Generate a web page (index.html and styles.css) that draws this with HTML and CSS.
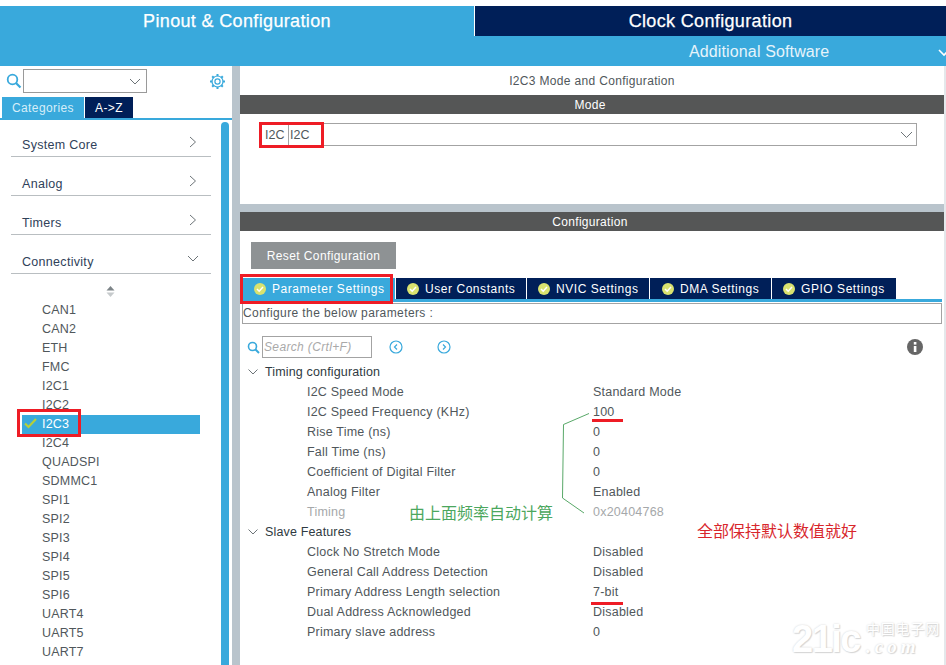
FILE: index.html
```html
<!DOCTYPE html>
<html lang="en">
<head>
<meta charset="utf-8">
<title>I2C3 Mode and Configuration</title>
<link rel="stylesheet" href="styles.css">
</head>
<body>
<div class="page">
  <header class="header">
    <div class="top-tabs">
      <div class="top-tab top-active">Pinout &amp; Configuration</div>
      <div class="top-tab top-dark">Clock Configuration</div>
    </div>
    <div class="sub-tab">
      <span class="sub-label">Additional Software</span>
      <svg class="sub-chev" width="10" height="8" viewBox="0 0 10 8"><path d="M1 1l5 5 5-5" fill="none" stroke="#fff" stroke-width="1.6"/></svg>
    </div>
  </header>
  <div class="main">
    <aside class="sidebar">
      <div class="search-row">
        <svg class="icon-search" width="16" height="16" viewBox="0 0 16 16"><circle cx="6.5" cy="6.5" r="4.8" fill="none" stroke="#39a9dc" stroke-width="1.8"/><path d="M10 10l4.5 4.5" stroke="#39a9dc" stroke-width="2.2"/></svg>
        <div class="combo">
          <svg width="12" height="7" viewBox="0 0 12 7"><path d="M1 1l5 5 5-5" fill="none" stroke="#6d7478" stroke-width="1"/></svg>
        </div>
        <svg class="icon-gear" width="17" height="17" viewBox="0 0 17 17"><circle cx="8.5" cy="8.5" r="2.6" fill="none" stroke="#39a9dc" stroke-width="1.2"/><circle cx="8.5" cy="8.5" r="5.5" fill="none" stroke="#39a9dc" stroke-width="1.2"/><path d="M8.5 1v2.2M8.5 13.8V16M1 8.5h2.2M13.8 8.5H16M3.2 3.2l1.5 1.5M12.3 12.3l1.5 1.5M13.8 3.2l-1.5 1.5M4.7 12.3l-1.5 1.5" stroke="#39a9dc" stroke-width="2"/></svg>
      </div>
      <div class="side-tabs">
        <div class="side-tab side-active">Categories</div>
        <div class="side-tab side-dark">A-&gt;Z</div>
      </div>
      <div class="side-body">
        <div class="side-content">
          <div class="cat"><span>System Core</span><svg width="8" height="12" viewBox="0 0 8 12"><path d="M1 1l5.500 5-5.500 5" fill="none" stroke="#6d7478"/></svg></div>
          <div class="cat"><span>Analog</span><svg width="8" height="12" viewBox="0 0 8 12"><path d="M1 1l5.500 5-5.500 5" fill="none" stroke="#6d7478"/></svg></div>
          <div class="cat"><span>Timers</span><svg width="8" height="12" viewBox="0 0 8 12"><path d="M1 1l5.500 5-5.500 5" fill="none" stroke="#6d7478"/></svg></div>
          <div class="cat"><span>Connectivity</span><svg class="cat-open" width="12" height="8" viewBox="0 0 12 8"><path d="M1 1l5 5 5-5" fill="none" stroke="#6d7478"/></svg></div>
          <div class="sorter">
            <svg width="9" height="11" viewBox="0 0 9 11"><path d="M4.500 0l4 4.500H.5z" fill="#7d8488"/><path d="M4.500 11l-4-4.500h8z" fill="#c6cacc"/></svg>
          </div>
          <ul class="ip-list">
            <li>CAN1</li><li>CAN2</li><li>ETH</li><li>FMC</li><li>I2C1</li><li>I2C2</li>
            <li class="ip-selected"><svg class="ip-check" width="13" height="11" viewBox="0 0 13 11"><path d="M1 5.500l3.500 3.500 7.500-8" fill="none" stroke="#b5cf3a" stroke-width="2.200"/></svg>I2C3</li>
            <li>I2C4</li><li>QUADSPI</li><li>SDMMC1</li><li>SPI1</li><li>SPI2</li><li>SPI3</li><li>SPI4</li><li>SPI5</li><li>SPI6</li><li>UART4</li><li>UART5</li><li>UART7</li>
          </ul>
        </div>
        <div class="scrollbar"></div>
      </div>
    </aside>
    <main class="content">
      <section class="mode-panel">
        <div class="panel-title">I2C3 Mode and Configuration</div>
        <div class="bar">Mode</div>
        <div class="mode-select">
          <span class="chip">I2C</span><span class="chip-value">I2C</span>
          <svg width="13" height="8" viewBox="0 0 13 8"><path d="M1 1l5.500 5.500L12 1" fill="none" stroke="#6d7478"/></svg>
        </div>
      </section>
      <section class="config-panel">
        <div class="bar">Configuration</div>
        <button class="reset" type="button">Reset Configuration</button>
        <div class="tabs">
          <div class="tab tab-active"><svg class="tick" width="12" height="12" viewBox="0 0 12 12"><circle cx="6" cy="6" r="6" fill="#d9e26f"/><path d="M3 6l2.200 2.200L9 4" fill="none" stroke="#fff" stroke-width="1.500"/></svg>Parameter Settings</div>
          <div class="tab tab-user"><svg class="tick" width="12" height="12" viewBox="0 0 12 12"><circle cx="6" cy="6" r="6" fill="#d9e26f"/><path d="M3 6l2.200 2.200L9 4" fill="none" stroke="#fff" stroke-width="1.500"/></svg>User Constants</div>
          <div class="tab tab-nvic"><svg class="tick" width="12" height="12" viewBox="0 0 12 12"><circle cx="6" cy="6" r="6" fill="#d9e26f"/><path d="M3 6l2.200 2.200L9 4" fill="none" stroke="#fff" stroke-width="1.500"/></svg>NVIC Settings</div>
          <div class="tab tab-dma"><svg class="tick" width="12" height="12" viewBox="0 0 12 12"><circle cx="6" cy="6" r="6" fill="#d9e26f"/><path d="M3 6l2.200 2.200L9 4" fill="none" stroke="#fff" stroke-width="1.500"/></svg>DMA Settings</div>
          <div class="tab tab-gpio"><svg class="tick" width="12" height="12" viewBox="0 0 12 12"><circle cx="6" cy="6" r="6" fill="#d9e26f"/><path d="M3 6l2.200 2.200L9 4" fill="none" stroke="#fff" stroke-width="1.500"/></svg>GPIO Settings</div>
        </div>
        <div class="hint">Configure the below parameters :</div>
        <div class="tools">
          <svg class="tool-search" width="13" height="13" viewBox="0 0 13 13"><circle cx="5.500" cy="5.500" r="4" fill="none" stroke="#39a9dc" stroke-width="1.600"/><path d="M8.500 8.500l3.500 3.500" stroke="#39a9dc" stroke-width="2"/></svg>
          <div class="search-box">Search (Crtl+F)</div>
          <svg class="nav nav-prev" width="14" height="14" viewBox="0 0 14 14"><circle cx="7" cy="7" r="6" fill="none" stroke="#39a9dc" stroke-width="1.200"/><path d="M8 4.500L5.500 7 8 9.500" fill="none" stroke="#39a9dc" stroke-width="1.200"/></svg>
          <svg class="nav nav-next" width="14" height="14" viewBox="0 0 14 14"><circle cx="7" cy="7" r="6" fill="none" stroke="#39a9dc" stroke-width="1.200"/><path d="M6 4.500L8.500 7 6 9.500" fill="none" stroke="#39a9dc" stroke-width="1.200"/></svg>
          <svg class="info" width="16" height="16" viewBox="0 0 16 16"><circle cx="8" cy="8" r="8" fill="#666"/><rect x="6.800" y="7" width="2.600" height="6" fill="#fff"/><rect x="6.800" y="3" width="2.600" height="2.600" fill="#fff"/></svg>
        </div>
        <div class="tree">
          <div class="group"><svg width="10" height="6" viewBox="0 0 10 6"><path d="M.5.500L5 5 9.500.500" fill="none" stroke="#6d7478"/></svg>Timing configuration</div>
          <div class="param"><span>I2C Speed Mode</span><span>Standard Mode</span></div>
          <div class="param"><span>I2C Speed Frequency (KHz)</span><span>100</span></div>
          <div class="param"><span>Rise Time (ns)</span><span>0</span></div>
          <div class="param"><span>Fall Time (ns)</span><span>0</span></div>
          <div class="param"><span>Coefficient of Digital Filter</span><span>0</span></div>
          <div class="param"><span>Analog Filter</span><span>Enabled</span></div>
          <div class="param param-off"><span>Timing</span><span>0x20404768</span></div>
          <div class="group"><svg width="10" height="6" viewBox="0 0 10 6"><path d="M.5.500L5 5 9.500.500" fill="none" stroke="#6d7478"/></svg>Slave Features</div>
          <div class="param"><span>Clock No Stretch Mode</span><span>Disabled</span></div>
          <div class="param"><span>General Call Address Detection</span><span>Disabled</span></div>
          <div class="param"><span>Primary Address Length selection</span><span>7-bit</span></div>
          <div class="param"><span>Dual Address Acknowledged</span><span>Disabled</span></div>
          <div class="param"><span>Primary slave address</span><span>0</span></div>
        </div>
      </section>
    </main>
    <div class="edge"></div>
  </div>

  <div class="mark mark-chip"></div>
  <div class="mark mark-i2c3"></div>
  <div class="mark mark-tab"></div>
  <div class="line line-100"></div>
  <div class="line line-7bit"></div>
  <svg class="bracket" width="30" height="102" viewBox="0 0 30 102"><path d="M28 .5L2.500 11.500 1.500 85 23 100" fill="none" stroke="#58a868"/></svg>
  <div class="note note-green">由上面频率自动计算</div>
  <div class="note note-red">全部保持默认数值就好</div>
  <div class="watermark"><span class="wm-big">21ic</span><span class="wm-side"><span class="wm-cn">中国电子网</span><span class="wm-com">.com</span></span></div>
</div>
</body>
</html>
```

FILE: styles.css
```css
* { box-sizing: border-box; }
html, body { margin: 0; padding: 0; background: #fff; }
body { font-family: "Liberation Sans", Arial, sans-serif; font-size: 12px; color: #50575b; }
.page { position: relative; width: 946px; height: 665px; overflow: hidden; background: #fff; padding-top: 6px; }

/* header */
.header { height: 60px; background: #39a9dc; color: #fff; }
.top-tabs { display: flex; height: 30px; }
.top-tab { display: flex; align-items: center; justify-content: center; padding-top: 1px; font-size: 18px; letter-spacing: .35px; -webkit-text-stroke: .25px #fff; }
.top-active { width: 474px; }
.top-dark { flex: 1; background: #001f58; border-left: 1px solid #fff; }
.sub-tab { position: relative; height: 30px; display: flex; align-items: center; padding: 1px 0 0 689px; font-size: 16px; letter-spacing: .13px; color: #e6f4fb; }
.sub-chev { position: absolute; right: -2px; top: 13px; }

/* layout */
.main { display: flex; height: 599px; background: #b9c4cc; }
.sidebar { width: 232px; background: #fff; display: flex; flex-direction: column; }
.content { width: 704px; margin-left: 8px; display: flex; flex-direction: column; gap: 8px; }
.edge { width: 2px; background: #e4e8eb; }

/* sidebar */
.search-row { display: flex; align-items: center; height: 31px; padding: 2px 0 3px 6px; }
.icon-search { margin-right: 1px; }
.combo { width: 124px; height: 24px; border: 1px solid #9a9a9a; display: flex; align-items: center; justify-content: flex-end; padding-right: 5px; }
.icon-gear { margin-left: 62px; }
.side-tabs { display: flex; height: 21px; padding-left: 2px; gap: 1px; }
.side-tab { display: flex; align-items: center; justify-content: center; color: #d6eef9; letter-spacing: .4px; }
.side-active { width: 82px; background: #39a9dc; }
.side-dark { width: 48px; background: #001f58; color: #fff; }
.side-body { flex: 1; display: flex; border-top: 2px solid #39a9dc; min-height: 0; padding: 2px 3px 0 1px; }
.side-content { width: 220px; padding-left: 10px; }
.scrollbar { width: 8px; background: #39a9dc; border-radius: 4px 4px 0 0; }
.cat { height: 39px; width: 200px; border-bottom: 1px solid #b9bec1; display: flex; align-items: flex-end; justify-content: space-between; padding: 0 14px 4px 11px; font-size: 12.500px; letter-spacing: .3px; color: #2f4159; }
.cat:first-child { height: 35px; }
.cat svg { margin-bottom: 4px; }
.cat .cat-open { margin: 0 -2px 6px 0; }
.sorter { height: 27px; display: flex; align-items: center; justify-content: center; padding: 8px 0 0 0; width: 198px; }
.ip-list { list-style: none; margin: 0; padding: 0; width: 189px; }
.ip-list li { position: relative; height: 19px; line-height: 19px; padding-left: 31px; font-size: 12.500px; letter-spacing: .2px; color: #50575b; }
.ip-list .ip-selected { background: #39a9dc; color: #fff; margin-left: 11px; padding-left: 20px; width: 178px; }
.ip-check { position: absolute; left: 2px; top: 3px; }

/* panels */
.mode-panel { height: 138px; background: #fff; }
.panel-title { height: 29px; display: flex; align-items: center; justify-content: center; letter-spacing: .33px; }
.bar { height: 19px; padding-right: 4px; background: #555656; color: #fff; display: flex; align-items: center; justify-content: center; letter-spacing: .3px; }
.mode-select { height: 23px; margin: 9px 27px 0 20px; border: 1px solid #a3a3a3; display: flex; align-items: center; padding-right: 3px; font-size: 12.500px; }
.chip { width: 28px; padding-left: 4px; height: 100%; line-height: 22px; border-right: 1px solid #a3a3a3; }
.chip-value { padding-left: 1px; flex: 1; }
.config-panel { flex: 1; background: #fff; min-height: 0; }
.reset { display: block; width: 145px; height: 27px; margin: 11px 0 9px 11px; border: 0; background: #8e9294; color: #fff; font: 12px "Liberation Sans", Arial, sans-serif; letter-spacing: .4px; padding: 0; }
.tabs { display: flex; height: 24px; padding-left: 2px; margin-right: 2px; border-bottom: 3px solid #39a9dc; }
.tab { height: 21px; display: flex; align-items: center; background: #001f58; color: #fff; letter-spacing: .55px; border-right: 1px solid #fff; }
.tab-active { width: 154px; padding-left: 12px; background: #39a9dc; }
.tab-user { width: 131px; padding-left: 11px; }
.tab-nvic { width: 123px; padding-left: 11px; }
.tab-dma { width: 122px; padding-left: 12px; }
.tab-gpio { width: 124px; padding-left: 11px; border-right: 0; }
.tick { margin-right: 6px; flex: none; }
.hint { height: 21px; margin: 1px 2px 0 2px; border: 1px solid #a3a3a3; line-height: 19px; letter-spacing: .4px; color: #50575b; }
.tools { position: relative; height: 22px; margin-top: 12px; display: flex; align-items: center; padding-left: 7px; }
.search-box { width: 110px; height: 22px; margin-left: 2px; border: 1px solid #a3a3a3; line-height: 20px; padding-left: 1px; font-style: italic; color: #a9a9a9; letter-spacing: .35px; white-space: nowrap; overflow: hidden; }
.nav-prev { margin-left: 17px; }
.nav-next { margin-left: 34px; }
.info { margin-left: 456px; }
.tree { padding-top: 4px; }
.group { height: 20px; display: flex; align-items: center; padding-left: 8px; color: #2f3a42; letter-spacing: .15px; font-size: 12.500px; }
.group svg { margin-right: 7px; }
.param { height: 20px; display: grid; grid-template-columns: 286px 1fr; align-items: center; padding-left: 67px; letter-spacing: .22px; font-size: 12.500px; }
.param-off { color: #a5a8aa; }

/* annotations */
.mark { position: absolute; border: 3px solid #ee1c25; }
.mark-chip { left: 259px; top: 122px; width: 65px; height: 26px; }
.mark-i2c3 { left: 17px; top: 409px; width: 64px; height: 28px; }
.mark-tab { left: 240px; top: 274px; width: 153px; height: 30px; }
.line { position: absolute; height: 3px; background: #ee1c25; }
.line-100 { left: 592px; top: 419px; width: 31px; }
.line-7bit { left: 591px; top: 602px; width: 32px; }
.bracket { position: absolute; left: 561px; top: 413px; }
.note { position: absolute; font-family: "Noto Sans CJK SC", sans-serif; font-size: 16px; line-height: 20px; white-space: nowrap; }
.note-green { left: 409px; top: 502px; color: #4ca75e; }
.note-red { left: 697px; top: 520px; color: #d8262c; }
.watermark { position: absolute; left: 792px; top: 620px; display: flex; color: #fff; text-shadow: 0 0 2px #d0d0d0, 1px 1px 1px #d8d8d8; }
.wm-big { font: bold 38px/38px "Liberation Sans", sans-serif; letter-spacing: -1.5px; }
.wm-side { display: flex; flex-direction: column; margin-left: 6px; }
.wm-cn { font: 14px/17px "Noto Sans CJK SC", sans-serif; letter-spacing: .8px; }
.wm-com { font: italic bold 19px/19px "Liberation Serif", serif; letter-spacing: 4px; }
```
